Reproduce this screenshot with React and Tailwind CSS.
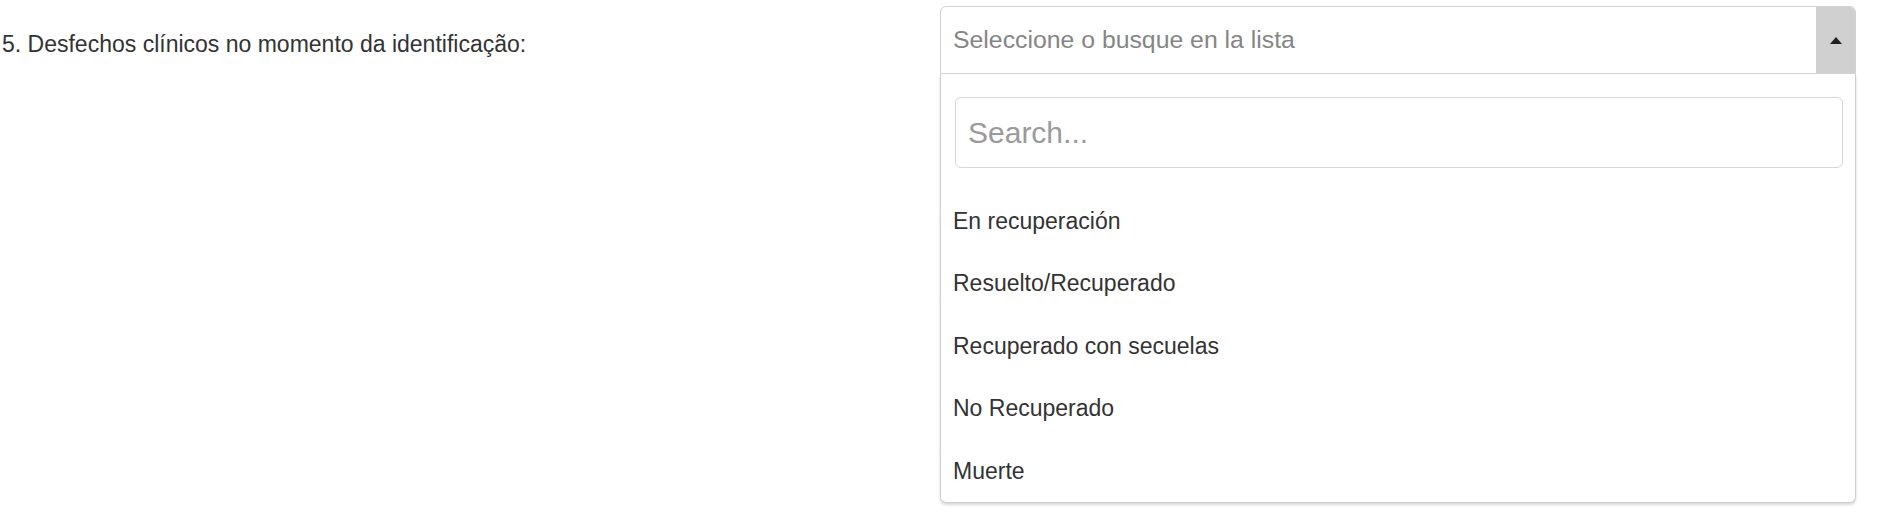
import React from "react";

const options = [
  "En recuperación",
  "Resuelto/Recuperado",
  "Recuperado con secuelas",
  "No Recuperado",
  "Muerte",
];

export default function App() {
  return (
    <div className="flex h-[522px] w-[1884px] bg-white font-['Liberation_Sans',Arial,sans-serif] text-[#333]">
      <div className="w-[940px] shrink-0 pl-[2px] pt-[30px] text-[23px] leading-[28px] text-[#333]">
        5. Desfechos clínicos no momento da identificação:
      </div>
      <div className="mt-[6px] flex w-[916px] shrink-0 flex-col">
        <div className="flex h-[68px] items-stretch rounded-t-[6px] border border-[#d2d2d2] bg-white">
          <div className="flex flex-1 items-center pl-[12px] text-[24.8px] text-[#858585]">
            Seleccione o busque en la lista
          </div>
          <div className="flex w-[39px] items-center justify-center rounded-tr-[5px] bg-[#d0d0d0]">
            <svg width="12" height="7" viewBox="0 0 12 7">
              <polygon points="6,0 12,7 0,7" fill="#222" />
            </svg>
          </div>
        </div>
        <div className="flex h-[429px] flex-col rounded-b-[6px] border border-t-0 border-[#cfcfcf] bg-white pl-[14px] pr-[12px] pt-[23px] shadow-[0_2px_3px_rgba(0,0,0,0.15)]">
          <div className="flex h-[71px] items-center rounded-[6px] border border-[#d6d6d6] pl-[12px] text-[30px] text-[#9a9a9a]">
            Search...
          </div>
          <div className="mt-[22px] -ml-[2px] flex flex-col">
            {options.map((o) => (
              <div key={o} className="flex h-[62.5px] items-center text-[23px] text-[#333]">
                {o}
              </div>
            ))}
          </div>
        </div>
      </div>
    </div>
  );
}
